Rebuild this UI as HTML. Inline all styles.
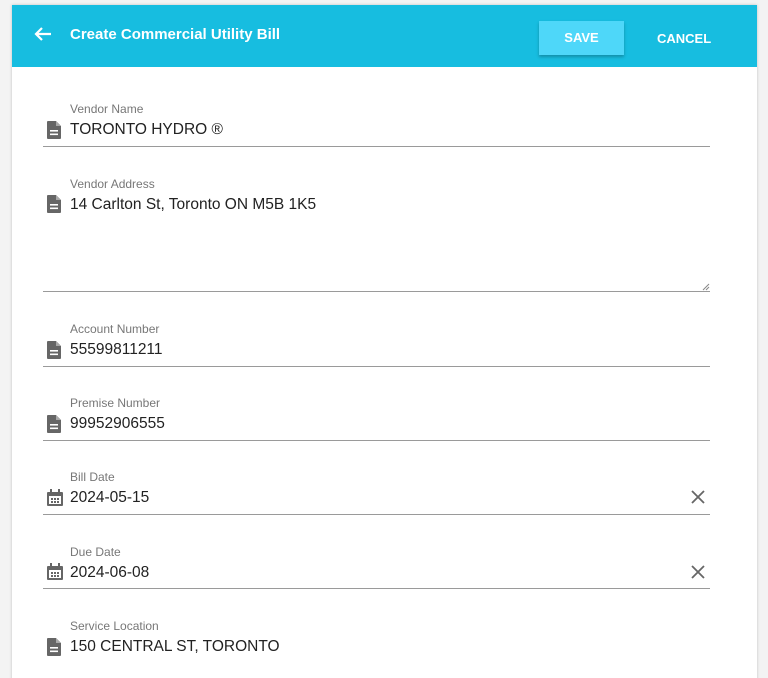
<!DOCTYPE html>
<html style="height:678px;overflow:hidden"><head><style>
body{margin:0;width:768px;height:678px;background:#f3f3f3;font-family:"Liberation Sans",sans-serif;overflow:hidden;position:relative}
.card{position:absolute;left:12px;top:5px;width:745px;height:700px;background:#fff;box-shadow:0 0 3px rgba(0,0,0,.2)}
.hdr{position:absolute;left:12px;top:5px;width:745px;height:62px;background:#17bde0}
.t{position:absolute;color:#fff;font-weight:bold;font-size:15px}
.save{position:absolute;left:539px;top:21px;width:85px;height:34px;background:#4ed7f9;box-shadow:0 2px 3px rgba(0,0,0,.25);color:#fff;font-weight:bold;font-size:13px;text-align:center;line-height:34px}
.lbl{position:absolute;left:70px;font-size:12px;color:#777}
.val{position:absolute;left:70px;font-size:15.5px;color:#222;margin-top:1px}
.ln{position:absolute;left:43px;width:667px;height:1px;background:#9a9a9a}
.ic{position:absolute;left:46px}
</style></head><body>
<div class="card"></div>
<div class="hdr"></div>
<svg style="position:absolute;left:33px;top:25px" width="20" height="18" viewBox="0 0 20 18"><path d="M18 9H3M9 3L3 9l6 6" stroke="#fff" stroke-width="2.2" fill="none"/></svg>
<div class="t" style="left:70px;top:26px">Create Commercial Utility Bill</div>
<div class="save">SAVE</div>
<div class="t" style="left:657px;top:31px;font-size:13px">CANCEL</div>

<svg width="0" height="0" style="position:absolute"><defs>
<symbol id="doc" viewBox="0 0 16 18"><path d="M2 0h8l5 5v12a1 1 0 0 1-1 1H2a1 1 0 0 1-1-1V1a1 1 0 0 1 1-1z" fill="#666"/><path d="M10 0v5h5z" fill="#aaa"/><rect x="4" y="9" width="8" height="1.6" fill="#fff"/><rect x="4" y="12.5" width="8" height="1.6" fill="#fff"/></symbol>
<symbol id="cal" viewBox="0 0 18 18"><rect x="1" y="3" width="16" height="14" rx="1" fill="#666"/><rect x="3" y="7" width="12" height="8" fill="#fff"/><rect x="4" y="0" width="2" height="4" fill="#666"/><rect x="12" y="0" width="2" height="4" fill="#666"/><g fill="#666"><rect x="5" y="9" width="2" height="2"/><rect x="8" y="9" width="2" height="2"/><rect x="11" y="9" width="2" height="2"/><rect x="5" y="12" width="2" height="2"/><rect x="8" y="12" width="2" height="2"/><rect x="11" y="12" width="2" height="2"/></g></symbol>
</defs></svg>

<div class="lbl" style="top:102px">Vendor Name</div>
<svg class="ic" style="top:121px" width="16" height="18"><use href="#doc"/></svg>
<div class="val" style="top:120px">TORONTO HYDRO ®</div>
<div class="ln" style="top:146px"></div>

<div class="lbl" style="top:177px">Vendor Address</div>
<svg class="ic" style="top:195px" width="16" height="18"><use href="#doc"/></svg>
<div class="val" style="top:195px">14 Carlton St, Toronto ON M5B 1K5</div>
<svg style="position:absolute;left:702px;top:283px" width="8" height="8"><path d="M1 7L7 1M4 7L7 4" stroke="#888" stroke-width="1"/></svg>
<div class="ln" style="top:291px"></div>

<div class="lbl" style="top:322px">Account Number</div>
<svg class="ic" style="top:341px" width="16" height="18"><use href="#doc"/></svg>
<div class="val" style="top:340px">55599811211</div>
<div class="ln" style="top:366px"></div>

<div class="lbl" style="top:396px">Premise Number</div>
<svg class="ic" style="top:415px" width="16" height="18"><use href="#doc"/></svg>
<div class="val" style="top:414px">99952906555</div>
<div class="ln" style="top:440px"></div>

<div class="lbl" style="top:470px">Bill Date</div>
<svg class="ic" style="top:489px" width="18" height="18"><use href="#cal"/></svg>
<div class="val" style="top:488px">2024-05-15</div>
<svg style="position:absolute;left:691px;top:490px" width="14" height="14"><path d="M1 1L13 13M13 1L1 13" stroke="#666" stroke-width="1.8"/></svg>
<div class="ln" style="top:514px"></div>

<div class="lbl" style="top:545px">Due Date</div>
<svg class="ic" style="top:563px" width="18" height="18"><use href="#cal"/></svg>
<div class="val" style="top:563px">2024-06-08</div>
<svg style="position:absolute;left:691px;top:565px" width="14" height="14"><path d="M1 1L13 13M13 1L1 13" stroke="#666" stroke-width="1.8"/></svg>
<div class="ln" style="top:588px"></div>

<div class="lbl" style="top:619px">Service Location</div>
<svg class="ic" style="top:638px" width="16" height="18"><use href="#doc"/></svg>
<div class="val" style="top:637px">150 CENTRAL ST, TORONTO</div>
</body></html>
